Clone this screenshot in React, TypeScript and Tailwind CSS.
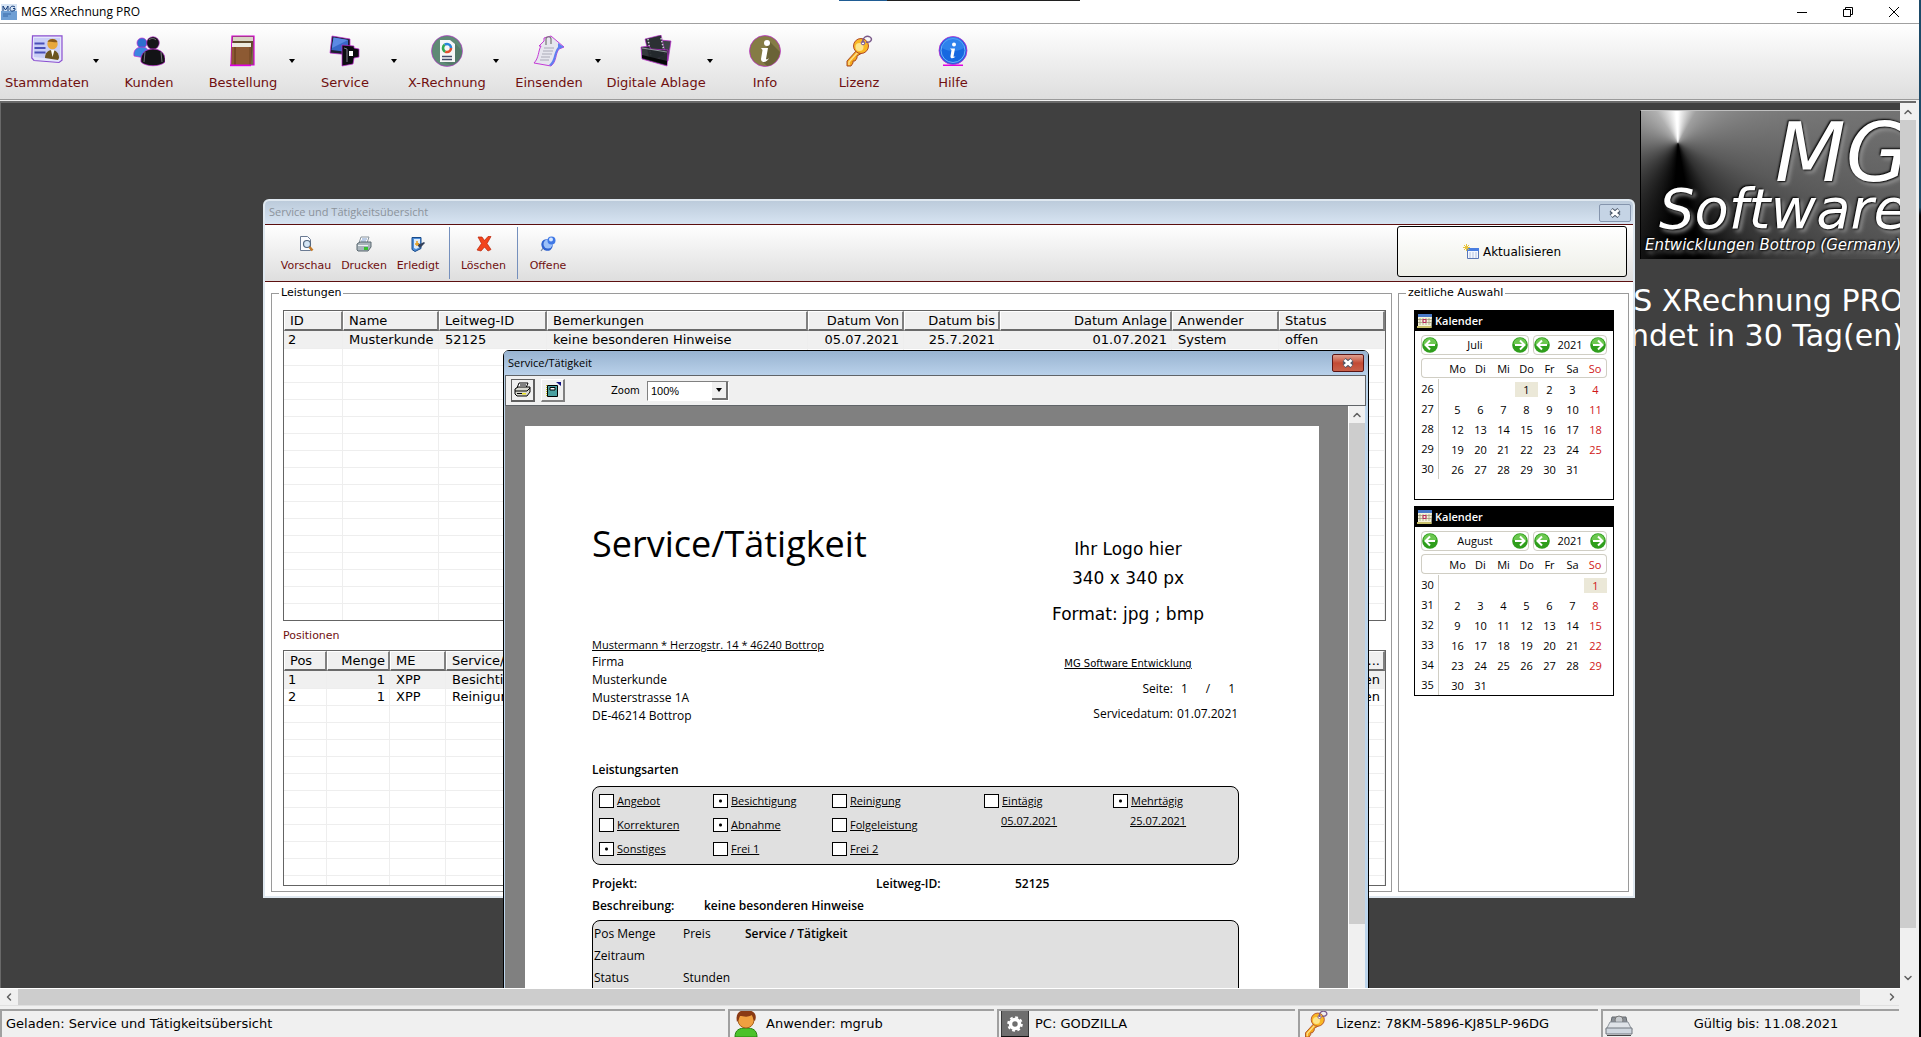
import React, { useState } from "react";
import { ChevronDown, ChevronLeft, ChevronRight, ChevronUp } from "lucide-react";

const FRINGE = "#c026d3";

/* ---------- Icons ---------- */

const CardIcon = () => (
  <svg className="h-8 w-8" viewBox="0 0 32 32">
    <path d="M1.5 0.8h29.5v24.5l-3 2.2L3 25.5 0.8 23z" fill="#e4e6fb" stroke="#8a4fd0" strokeWidth="1.2" />
    <path d="M3 3h26v20l-2 1.5L3 22z" fill="#c9cdf6" />
    <path d="M3.5 8.5h10M3.5 13h11M3.5 17.5h11" stroke="#4b50b8" strokeWidth="1.8" />
    <path d="M14 23c0-5 3-8 7-8s7 3 7 8l-1 2z" fill="#6b5420" />
    <path d="M20 15l1.5 7 2-7z" fill="#fff" />
    <circle cx="21.5" cy="9" r="5.2" fill="#e8a83c" />
    <path d="M16.5 7c1-4 9-4 10 0-2 1-8-1-10 0z" fill="#8a5a1a" />
  </svg>
);

const UsersIcon = () => (
  <svg className="h-8 w-8" viewBox="0 0 32 32">
    <circle cx="9" cy="8" r="5" fill="#2d6fd0" stroke={FRINGE} strokeWidth="0.7" />
    <path d="M1 21c-1-6 3-9 8-9s7 3 8 8l-5 3z" fill="#3b86e0" stroke={FRINGE} strokeWidth="0.7" />
    <circle cx="20" cy="8" r="6.3" fill="#16161a" stroke={FRINGE} strokeWidth="0.6" />
    <path d="M8 27c-1-9 5-13 12-13s13 4 12 13c-5 5-19 5-24 0z" fill="#131316" stroke={FRINGE} strokeWidth="0.7" />
    <path d="M12 17l-1 10M28 17l1 10" stroke="#8a8a92" strokeWidth="0.8" />
    <path d="M16 5c2-2 5-2 7 0" stroke="#777" fill="none" />
  </svg>
);

const BooksIcon = () => (
  <svg className="h-8 w-8" viewBox="0 0 32 32">
    <path d="M5 1h22v29H4z" fill="#7a6a48" stroke="#d400d4" strokeWidth="1.2" />
    <path d="M6 2h20v4H6z" fill="#d8d6c4" />
    <path d="M6 6h20l-2 24H6z" fill="#5f4a2c" />
    <path d="M5 8h19v4H5z" fill="#eceade" />
    <path d="M4.500 12H24v18H4.500z" fill="#8d5a33" />
    <path d="M8 12v18" stroke="#5e3618" />
    <path d="M23 12v18" stroke="#6d4423" />
    <path d="M3 29.500h21v1.700H3z" fill="#e000e0" />
  </svg>
);

const ServiceIcon = () => (
  <svg className="h-8 w-8" viewBox="0 0 32 32">
    <path d="M3 1l18 3v16l-20-2z" fill="#1c1f30" stroke={FRINGE} strokeWidth="0.7" />
    <path d="M4.500 2.500L19 5v12L2.500 15z" fill="#3868c8" />
    <path d="M4.500 2.500L19 5 3 13z" fill="#5b8ae4" />
    <path d="M13 10l12 1v2l5 1v8l-5 1-1 6-11 2z" fill="#0c0c10" stroke={FRINGE} strokeWidth="0.7" />
    <path d="M20 16h4v5h-4z" fill="#fff" />
    <path d="M15 13l3 1v13" stroke="#80808c" fill="none" />
  </svg>
);

const InvoiceIcon = () => (
  <svg className="h-8 w-8" viewBox="0 0 32 32">
    <circle cx="16" cy="16" r="15.500" fill="#5f8a76" stroke={FRINGE} strokeWidth="0.6" />
    <path d="M24 8l7 8c0 7-5 13-11 14l-11-4z" fill="#547a69" />
    <path d="M9 5h10l5 4v18H9z" fill="#f7f7f7" />
    <circle cx="16" cy="13" r="4" fill="none" stroke="#e2502c" strokeWidth="2.600" strokeDasharray="8 17" />
    <circle cx="16" cy="13" r="4" fill="none" stroke="#35a853" strokeWidth="2.600" strokeDasharray="8 17" strokeDashoffset="-8" />
    <circle cx="16" cy="13" r="4" fill="none" stroke="#2a86d8" strokeWidth="2.600" strokeDasharray="9 16" strokeDashoffset="-16" />
    <path d="M11 21.500h10M11 24.500h10" stroke="#444b68" strokeWidth="1.300" />
  </svg>
);

const SendIcon = () => (
  <svg className="h-8 w-8" viewBox="0 0 32 32">
    <path d="M11 3l7-2 13 11-5 2c-4 5-2 12-8 17L1 28c5-5 4-12 7-17H6l5-5z" fill="#e6e6ee" stroke={FRINGE} strokeWidth="0.9" />
    <path d="M25 12c-5 6-3 13-9 18l2 1c6-5 4-12 8-17l5-2-6-4z" fill="#5f7ff0" />
    <path d="M11 13h10M10 16h10M9 19h10M8 22h9M7 25h9" stroke="#a4a4b0" strokeWidth="0.9" />
    <path d="M13 10V4c0-3 5-3 5 0v5" stroke="#777" fill="none" strokeWidth="1.200" />
  </svg>
);

const ArchiveIcon = () => (
  <svg className="h-8 w-8" viewBox="0 0 32 32">
    <path d="M20 5l11 1-3 20-8 2z" fill="#3e4448" stroke={FRINGE} strokeWidth="0.7" />
    <path d="M5 4l16-4 5 20-16 6z" fill="#2b3033" stroke={FRINGE} strokeWidth="0.6" />
    <path d="M8 4l3 18M21 3l4 17" stroke="#c8ced2" strokeWidth="1.500" strokeDasharray="1.500 1.500" />
    <path d="M1 12l8-1 2 3 17 1-1 16-25-7z" fill="#23282b" fillOpacity="0.920" stroke={FRINGE} strokeWidth="0.7" />
    <path d="M2 13l25 4" stroke="#8f979b" />
    <path d="M2 20l25 6v4L2 23z" fill="#050607" />
  </svg>
);

const InfoIcon = () => (
  <svg className="h-8 w-8" viewBox="0 0 32 32">
    <circle cx="16" cy="16" r="15.500" fill="#857c45" stroke={FRINGE} strokeWidth="0.700" />
    <path d="M20 6l11 11c-1 7-6 13-13 14l-5-5z" fill="#6a6337" />
    <circle cx="18" cy="8" r="3" fill="#fff" />
    <path d="M12 13h7l-2 11c1 1 2 0 3-1-1 4-8 6-8 1l1.500-9z" fill="#fff" />
  </svg>
);

const KeyIcon = ({ className = "h-8 w-8" }: { className?: string }) => (
  <svg className={className} viewBox="0 0 32 32">
    <path d="M14 15L4 26v5h4l2-3v-2h2l2-3v-2l5-3z" fill="#f5a81c" stroke="#a84a20" />
    <path d="M15 17L6 27v3" stroke="#fde08a" strokeWidth="1.500" fill="none" />
    <circle cx="18" cy="11" r="7.500" fill="#f9b825" stroke="#b04a28" />
    <circle cx="16.500" cy="12" r="4" fill="#fde58a" />
    <circle cx="20" cy="8" r="1.800" fill="#fff" stroke="#7a5a9a" />
    <path d="M20 8c-1-6 4-8 7-6s1 6-4 5" fill="none" stroke="#7a5a8a" strokeWidth="1.500" />
  </svg>
);

const HelpIcon = () => (
  <svg className="h-8 w-8" viewBox="0 0 32 32">
    <path d="M6 29.500h20v1.500H6z" fill="#e000e0" />
    <circle cx="16" cy="15.500" r="14" fill="#1668e0" stroke={FRINGE} strokeWidth="0.800" />
    <circle cx="16" cy="15.500" r="12" fill="none" stroke="#8cc0ff" strokeWidth="0.800" />
    <path d="M5 13a11 11 0 0 1 22 0c-6 4-16 4-22 0z" fill="#3f94f4" opacity="0.600" />
    <circle cx="17" cy="9.500" r="2" fill="#fff" />
    <path d="M13 13.500h5l-1.500 8c1 .5 1.500 0 2-.5-1 2.500-5.500 3.500-5 0l1-6z" fill="#fff" />
  </svg>
);

const PreviewIcon = () => (
  <svg className="h-4 w-4" viewBox="0 0 16 16">
    <path d="M2.500 .5h7l3 3v11h-10z" fill="#fbfcff" stroke="#6a7a92" />
    <circle cx="9" cy="8" r="3.500" fill="#d5e6f6" stroke="#52677f" strokeWidth="1.200" />
    <path d="M11.500 11l3 3.500" stroke="#c47a28" strokeWidth="2.500" />
  </svg>
);

const PrinterIcon = () => (
  <svg className="h-4 w-4" viewBox="0 0 16 16">
    <path d="M5 1h8l-2 6H3z" fill="#fff" stroke="#8a949c" />
    <path d="M6 3h5M5 5h5" stroke="#7a9acb" />
    <path d="M1 8l3-2h11v5l-3 4H2l-1-1z" fill="#a9b4bb" stroke="#5b6870" />
    <path d="M2 9.500h10" stroke="#eef2f4" />
    <path d="M8 11h4v3H8z" fill="#36c030" />
  </svg>
);

const DoneIcon = () => (
  <svg className="h-4 w-4" viewBox="0 0 16 16">
    <path d="M2 1.500h9v11l-6 3-3-2z" fill="#4f8ed8" stroke="#174a8a" />
    <path d="M4 3h6v8l-4 2-2-1z" fill="#dcebfa" />
    <path d="M8 7l2 1 4-2 1 1-5 5-2-2z" fill="#33405a" />
    <path d="M7 5v5M5 8h4" stroke="#e8a020" strokeWidth="1.500" />
  </svg>
);

const DeleteIcon = () => (
  <svg className="h-4 w-4" viewBox="0 0 16 16">
    <path d="M2 1h4l2.500 3.500L12 .5h3L11 7.500l4 6-3 1.500-3.500-4L5 15l-4-1 4.500-6.500z" fill="#f2451c" stroke="#b82208" strokeWidth="0.700" />
  </svg>
);

const PinIcon = () => (
  <svg className="h-4 w-4" viewBox="0 0 16 16">
    <path d="M4 11l-3 4" stroke="#7a8aa0" strokeWidth="1.200" />
    <ellipse cx="7" cy="9" rx="5.500" ry="6" fill="#2f62d0" transform="rotate(-35 7 9)" />
    <circle cx="8" cy="8" r="4.500" fill="#9cc0f8" />
    <circle cx="11.500" cy="4.500" r="4" fill="#3f78e6" />
    <circle cx="11" cy="3.500" r="2" fill="#d5e6ff" />
  </svg>
);

const RefreshIcon = () => (
  <svg className="h-4 w-4" viewBox="0 0 16 16">
    <path d="M4.500 4.500h11v10h-11z" fill="#f4f8ff" stroke="#5a78b8" />
    <path d="M4 4h12v3H4z" fill="#4a7ee0" />
    <path d="M6 9h8M6 11h8M6 13h8" stroke="#b3c2de" strokeDasharray="2 1" />
    <path d="M3.500 0v7M0 3.500h7M1 1l5 5M6 1L1 6" stroke="#e8c23a" />
  </svg>
);

const CalendarIcon = () => (
  <svg className="h-4 w-4" viewBox="0 0 16 16">
    <path d="M1 1h14v3H1z" fill="#4a7ac8" />
    <path d="M1 4h14l-.5 10H1z" fill="#f5f3da" />
    <path d="M3 5v7M6 5v7M9 5v7M12 5v7M1 6.500h14M1 9.500h14" stroke="#9a9470" strokeWidth="0.700" />
    <path d="M6 6.500h3v3H6z" fill="none" stroke="#c02860" />
    <path d="M0 13h14l1 2H0z" fill="#c9c06a" />
  </svg>
);

const RoundArrow = ({ flip }: { flip?: boolean }) => (
  <svg className={flip ? "h-4 w-4 -scale-x-100" : "h-4 w-4"} viewBox="0 0 16 16">
    <circle cx="8" cy="8" r="7.800" fill="#2f9e1c" />
    <path d="M1.500 7a6.500 6 0 0 1 13 0c-4 2-9 2-13 0z" fill="#6cc850" />
    <path d="M4 8h9M8 3.500L3.500 8 8 12.500" stroke="#fff" strokeWidth="2" fill="none" />
  </svg>
);

const UserIcon = () => (
  <svg className="h-7 w-7 shrink-0 self-end" viewBox="0 0 28 28">
    <path d="M3 28c0-7 4-9 11-9s11 2 11 9z" fill="#4cc22a" stroke="#268010" />
    <circle cx="14" cy="11" r="8" fill="#f0a040" stroke="#a8601a" />
    <path d="M5 13C3 4 8 1 14 1s12 3 9 11c-2-1-2-4-3-6-5 3-9 1-12 1-1 2-1 4-3 6z" fill="#8a3a14" />
  </svg>
);

const GearIcon = () => (
  <svg className="h-7 w-7 shrink-0" viewBox="0 0 28 28">
    <path d="M.5 .5h27v27H.5z" fill="#6e6e6e" stroke="#3a3a3a" />
    <path d="M0 26h28v2H0z" fill="#111" />
    <circle cx="14" cy="14" r="4.500" fill="none" stroke="#fff" strokeWidth="3.500" />
    <circle cx="14" cy="14" r="6.800" fill="none" stroke="#fff" strokeWidth="2" strokeDasharray="2.800 2.540" />
  </svg>
);

const DriveIcon = () => (
  <svg className="h-7 w-7 shrink-0" viewBox="0 0 28 28">
    <path d="M6 12l1-5h14l1 5z" fill="#8b9096" stroke="#666b70" />
    <circle cx="14" cy="10" r="4" fill="#c8ccd0" stroke="#777" />
    <path d="M1 20l4-8h18l4 8z" fill="#dfe3e8" stroke="#8e959c" />
    <path d="M1 18h26v6H1z" fill="#cfd6de" stroke="#70777e" />
    <path d="M2 25.500h24" stroke="#444" />
  </svg>
);

const AppIcon = () => (
  <svg className="h-4 w-4" viewBox="0 0 16 16">
    <path d="M0 0h16v16H0z" fill="#6f9fd4" />
    <path d="M0 0h16v7H0z" fill="#d6e4f4" />
    <path d="M2 7V2l2.500 4L7 2v5M14 3c-3-2-5 0-5 2s2 3 5 1V4.500h-2" stroke="#123a78" fill="none" />
    <path d="M2 10h8M2 12h5" stroke="#3a6aa8" />
  </svg>
);

const CloseGlyph = () => (
  <svg className="h-3 w-3" viewBox="0 0 12 12">
    <path d="M2 3l8 6M10 3L2 9" stroke="#4a5668" strokeWidth="5" />
    <path d="M2.500 3l7 6M9.500 3l-7 6" stroke="#fff" strokeWidth="2.800" />
  </svg>
);

const Triangle = () => (
  <svg className="h-1 w-2" viewBox="0 0 8 4">
    <path d="M1 0h6L4 4z" fill="#000" />
  </svg>
);

/* ---------- Data ---------- */

const mainItems = [
  { label: "Stammdaten", icon: CardIcon, menu: true, width: "w-[86px]" },
  { label: "Kunden", icon: UsersIcon, menu: false, width: "mr-1 w-[86px]" },
  { label: "Bestellung", icon: BooksIcon, menu: true, width: "w-[86px]" },
  { label: "Service", icon: ServiceIcon, menu: true, width: "w-[86px]" },
  { label: "X-Rechnung", icon: InvoiceIcon, menu: true, width: "w-[86px]" },
  { label: "Einsenden", icon: SendIcon, menu: true, width: "w-[86px]" },
  { label: "Digitale Ablage", icon: ArchiveIcon, menu: true, width: "w-[96px]" },
  { label: "Info", icon: InfoIcon, menu: false, width: "w-[90px]" },
  { label: "Lizenz", icon: KeyIcon, menu: false, width: "w-[90px]" },
  { label: "Hilfe", icon: HelpIcon, menu: false, width: "w-[90px]" },
];

interface Column {
  title: string;
  width: string;
  right?: boolean;
}

const serviceColumns: Column[] = [
  { title: "ID", width: "w-[59px]" },
  { title: "Name", width: "w-[96px]" },
  { title: "Leitweg-ID", width: "w-[108px]" },
  { title: "Bemerkungen", width: "w-[261px]" },
  { title: "Datum Von", width: "w-[96px]", right: true },
  { title: "Datum bis", width: "w-[96px]", right: true },
  { title: "Datum Anlage", width: "w-[172px]", right: true },
  { title: "Anwender", width: "w-[107px]" },
  { title: "Status", width: "" },
];

const serviceRows = [
  ["2", "Musterkunde", "52125", "keine besonderen Hinweise", "05.07.2021", "25.7.2021", "01.07.2021", "System", "offen"],
];

const positionColumns: Column[] = [
  { title: "Pos", width: "w-[43px]" },
  { title: "Menge", width: "w-[63px]", right: true },
  { title: "ME", width: "w-[56px]" },
  { title: "Service/Tätigkeit", width: "" },
  { title: "Sta...", width: "w-[60px]", right: true },
];

const positionRows = [
  ["1", "1", "XPP", "Besichtigung", "offen"],
  ["2", "1", "XPP", "Reinigung", "offen"],
];

const weekdays = ["Mo", "Di", "Mi", "Do", "Fr", "Sa", "So"];

/* ---------- Building blocks ---------- */

const DataTable = ({ columns, rows, fill }: { columns: Column[]; rows: string[][]; fill: number }) => (
  <table className="w-full table-fixed border-separate border-spacing-0 text-[13px] leading-4 text-black">
    <thead>
      <tr>
        {columns.map((c) => (
          <th
            key={c.title}
            className={`${c.width} h-[20px] overflow-hidden border-t border-l border-r-2 border-b-2 border-t-white border-l-white border-r-[#808080] border-b-[#6a6a6a] bg-[#f0f0f0] font-normal whitespace-nowrap ${c.right ? "pr-[3px] text-right" : "pl-[5px] text-left"}`}
          >
            {c.title}
          </th>
        ))}
      </tr>
    </thead>
    <tbody>
      {rows.map((row, r) => (
        <tr key={r} className={r === 0 ? "h-[18px] bg-[#f0f0f0]" : "h-[17px]"}>
          {row.map((cell, i) => (
            <td
              key={i}
              className={`overflow-hidden border-r border-b border-[#eeeeee] py-0 whitespace-nowrap ${columns[i].right ? "pr-1 text-right" : i === 0 ? "pl-1" : "pl-[6px]"}`}
            >
              {cell}
            </td>
          ))}
        </tr>
      ))}
      {Array.from({ length: fill }).map((_, r) => (
        <tr key={`empty-${r}`} className="h-[17px]">
          {columns.map((c) => (
            <td key={c.title} className="border-r border-b border-[#eeeeee] p-0"></td>
          ))}
        </tr>
      ))}
    </tbody>
  </table>
);

interface CalendarProps {
  month: string;
  firstWeek: number;
  offset: number;
  weeks: number;
}

const Calendar = ({ month, firstWeek, offset, weeks }: CalendarProps) => (
  <section className="h-[190px] w-[200px] overflow-hidden border border-black bg-white font-['Open_Sans',sans-serif] text-[11px] text-black">
    <header className="flex h-5 items-center gap-0.5 bg-black px-0.5 font-semibold text-white">
      <CalendarIcon />
      Kalender
    </header>
    <div className="flex gap-1 px-1.5 pt-1">
      <div className="flex h-5 flex-1 items-center justify-between rounded border border-[#d0cec4]">
        <button aria-label="Monat zurück"><RoundArrow /></button>
        <span>{month}</span>
        <button aria-label="Monat vor"><RoundArrow flip /></button>
      </div>
      <div className="flex h-5 w-[74px] items-center justify-between rounded border border-[#d0cec4]">
        <button aria-label="Jahr zurück"><RoundArrow /></button>
        <span>2021</span>
        <button aria-label="Jahr vor"><RoundArrow flip /></button>
      </div>
    </div>
    <table className="mx-1.5 mt-[3px] w-[186px] table-fixed border-separate border-spacing-0 text-center leading-[15px]">
      <thead>
        <tr className="h-5">
          <th className="w-[25px] rounded-l border-y border-l border-[#d0cec4] p-0"></th>
          {weekdays.map((d) => (
            <th
              key={d}
              className={`border-y border-[#d0cec4] p-0 font-normal ${d === "So" ? "rounded-r border-r text-[#d01818]" : ""}`}
            >
              {d}
            </th>
          ))}
        </tr>
      </thead>
      <tbody className="before:block before:h-px">
        {Array.from({ length: weeks }).map((_, w) => (
          <tr key={w} className="h-5">
            <td className="p-0">
              <span className="block h-5 w-[18px] border-r border-[#d0cec4] pr-1 leading-5">{firstWeek + w}</span>
            </td>
            {weekdays.map((d, i) => {
              const day = w * 7 + i + 1 - offset;
              return (
                <td key={d} className={`p-0 ${d === "So" ? "text-[#d01818]" : ""}`}>
                  {day > 0 && day <= 31 && <span className={day === 1 ? "block bg-[#ebe8d8]" : "block"}>{day}</span>}
                </td>
              );
            })}
          </tr>
        ))}
      </tbody>
    </table>
  </section>
);

const ToolButton = ({ label, icon: Icon, width }: { label: string; icon: React.FC; width: string }) => (
  <button className={`${width} flex flex-col items-center justify-end gap-[5px] pb-[6px] text-[11px] leading-[18px] text-[#701010]`}>
    <Icon />
    {label}
  </button>
);

const Check = ({ label, on = false }: { label: string; on?: boolean }) => (
  <label className="flex h-6 items-center gap-[3px] text-[11px] underline">
    <input
      type="checkbox"
      defaultChecked={on}
      className="h-[14px] w-[15px] appearance-none border border-black bg-white checked:bg-[radial-gradient(circle,black_1px,transparent_2px)]"
    />
    {label}
  </label>
);

const Report = () => (
  <article className="min-h-[1123px] w-[794px] shrink-0 bg-white pt-[93px] pr-20 pl-[67px] font-['Open_Sans',sans-serif] text-[12px] leading-[18px] text-black">
    <div className="flex justify-between">
      <div>
        <h1 className="text-[36px] leading-[50px]">Service/Tätigkeit</h1>
        <p className="mt-[68px] text-[11px] leading-4 underline">Mustermann * Herzogstr. 14 * 46240 Bottrop</p>
        <address className="not-italic">
          Firma<br />Musterkunde<br />Musterstrasse 1A<br />DE-46214 Bottrop
        </address>
      </div>
      <div className="w-[222px] pt-5">
        <div className="flex flex-col items-center font-['DejaVu_Sans',sans-serif] text-[17px] leading-5">
          <span>Ihr Logo hier</span>
          <span className="mt-[9px]">340 x 340 px</span>
          <span className="mt-4">Format: jpg ; bmp</span>
          <span className="mt-8 text-[10px] leading-4 underline">MG Software Entwicklung</span>
        </div>
        <dl className="mt-[9px] grid grid-cols-[156px_1fr] gap-x-1 gap-y-[9px] leading-4">
          <dt className="text-right">Seite:</dt>
          <dd className="flex justify-between pr-1 pl-1"><span>1</span><span>/</span><span>1</span></dd>
          <dt className="text-right">Servicedatum:</dt>
          <dd className="whitespace-nowrap">01.07.2021</dd>
        </dl>
      </div>
    </div>
    <h2 className="mt-9 font-semibold">Leistungsarten</h2>
    <div className="mt-[7px] grid h-[79px] grid-cols-[114px_119px_152px_129px_1fr] rounded-lg border border-black bg-[#e0e0e0] pt-0.5 pl-1.5">
      <div>
        <Check label="Angebot" />
        <Check label="Korrekturen" />
        <Check label="Sonstiges" on />
      </div>
      <div>
        <Check label="Besichtigung" on />
        <Check label="Abnahme" on />
        <Check label="Frei 1" />
      </div>
      <div>
        <Check label="Reinigung" />
        <Check label="Folgeleistung" />
        <Check label="Frei 2" />
      </div>
      <div>
        <Check label="Eintägig" />
        <p className="pl-[17px] text-[11px] leading-4 underline">05.07.2021</p>
      </div>
      <div>
        <Check label="Mehrtägig" on />
        <p className="pl-[17px] text-[11px] leading-4 underline">25.07.2021</p>
      </div>
    </div>
    <div className="mt-[10px] grid grid-cols-[284px_139px_1fr] font-semibold">
      <span>Projekt:</span>
      <span>Leitweg-ID:</span>
      <span>52125</span>
    </div>
    <div className="mt-1 grid grid-cols-[112px_1fr] font-semibold">
      <span>Beschreibung:</span>
      <span>keine besonderen Hinweise</span>
    </div>
    <div className="mt-[5px] grid h-[160px] grid-cols-[89px_62px_1fr] content-start gap-y-1 rounded-lg border border-black bg-[#e0e0e0] py-1 pl-px">
      <span>Pos Menge</span>
      <span>Preis</span>
      <span className="font-semibold">Service / Tätigkeit</span>
      <span className="col-span-3">Zeitraum</span>
      <span>Status</span>
      <span>Stunden</span>
    </div>
  </article>
);

const ServiceWindow = () => (
  <section className="absolute top-[96px] left-[262px] flex h-[699px] w-[1372px] flex-col rounded-t-md border-2 border-[#dfe8f0] bg-white">
    <header className="flex h-[23px] shrink-0 items-center justify-between rounded-t bg-linear-to-b from-[#bccbdb] to-[#d7e4f2] pr-0.5 pl-1 font-['Open_Sans',sans-serif] text-[11px] text-[#8b939c]">
      Service und Tätigkeitsübersicht
      <button aria-label="Schließen" className="flex h-[18px] w-8 items-center justify-center rounded-xs border border-[#8595ad] bg-[#c5d4e5]">
        <CloseGlyph />
      </button>
    </header>
    <div className="flex h-[58px] shrink-0 items-stretch border-y border-[#5c1010] bg-linear-to-b from-white to-[#dedede] pr-1.5">
      <div className="flex w-[184px] pl-2.5">
        <ToolButton label="Vorschau" icon={PreviewIcon} width="w-[62px]" />
        <ToolButton label="Drucken" icon={PrinterIcon} width="w-[54px]" />
        <ToolButton label="Erledigt" icon={DoneIcon} width="w-[54px]" />
      </div>
      <div className="my-0.5 w-px bg-[#7590bd]"></div>
      <ToolButton label="Löschen" icon={DeleteIcon} width="w-[67px]" />
      <div className="my-0.5 w-px bg-[#7590bd]"></div>
      <ToolButton label="Offene" icon={PinIcon} width="w-[60px]" />
      <button className="mt-px mb-1 ml-auto flex w-[230px] items-center justify-center gap-1 rounded-[3px] border border-black bg-linear-to-b from-white to-[#eeefe8] text-[12px] text-black">
        <RefreshIcon />
        Aktualisieren
      </button>
    </div>
    <div className="flex min-h-0 flex-1 gap-1.5 pt-1 pr-1 pb-1 pl-1.5 text-black">
      <fieldset className="min-w-0 flex-1 border border-[#9a9a9a] pr-[5px] pl-[11px]">
        <legend className="-ml-1 px-0.5 text-[11px] leading-[14px]">Leistungen</legend>
        <div className="mt-[10px] h-[311px] overflow-hidden border border-[#646464]">
          <DataTable columns={serviceColumns} rows={serviceRows} fill={16} />
        </div>
        <h3 className="text-[11px] leading-[29px] text-[#701010]">Positionen</h3>
        <div className="h-[236px] overflow-hidden border border-[#646464]">
          <DataTable columns={positionColumns} rows={positionRows} fill={11} />
        </div>
      </fieldset>
      <fieldset className="w-[231px] border border-[#9a9a9a] pl-[15px]">
        <legend className="-ml-2 px-0.5 text-[11px] leading-[14px]">zeitliche Auswahl</legend>
        <div className="mt-[10px] flex flex-col gap-1.5">
          <Calendar month="Juli" firstWeek={26} offset={3} weeks={5} />
          <Calendar month="August" firstWeek={30} offset={6} weeks={6} />
        </div>
      </fieldset>
    </div>
  </section>
);

const PreviewWindow = () => {
  const [zoom, setZoom] = useState("100%");

  return (
    <section className="absolute top-[247px] -bottom-2 left-[502px] flex w-[866px] flex-col rounded-t-md border border-black bg-[#bcd5ec]">
      <header className="flex h-6 shrink-0 items-center justify-between rounded-t bg-linear-to-b from-[#98b3d0] to-[#b9d1ea] pr-1 pl-1 font-['Open_Sans',sans-serif] text-[11px] text-black">
        Service/Tätigkeit
        <button aria-label="Schließen" className="flex h-[18px] w-8 items-center justify-center rounded-xs border border-[#5a1414] bg-linear-to-b from-[#e0a090] via-[#c34a34] to-[#c8604a]">
          <CloseGlyph />
        </button>
      </header>
      <div className="mr-0.5 ml-px flex h-[31px] shrink-0 items-center border border-[#606468] bg-[#f0f0f0] pl-[5px] text-black">
        <button aria-label="Drucken" className="flex h-[23px] w-6 items-center justify-center border-t border-r-2 border-b-2 border-l border-[#606060]">
          <svg className="h-4 w-[18px]" viewBox="0 0 18 16">
            <path d="M5 1h9l-2 5H3z" fill="#fff" stroke="#000" />
            <path d="M1 7l3-2h12v5l-3 4H3l-2-2z" fill="#d8d8d0" stroke="#000" />
            <path d="M1 9h12l3-3M3 11.500h9M6 3h6" stroke="#000" fill="none" />
            <path d="M8 11h4v1.500H8z" fill="#e8e020" />
          </svg>
        </button>
        <button aria-label="Export" className="ml-1.5 flex h-[23px] w-6 items-center justify-center border-t border-r-2 border-b-2 border-l border-t-white border-r-[#808080] border-b-[#808080] border-l-white">
          <svg className="h-4 w-4" viewBox="0 0 16 16">
            <path d="M2.500 3.500h10v11h-10z" fill="#4aa0a0" stroke="#000" />
            <path d="M5 5.500h5v2.500H5z" fill="#fff" stroke="#000" />
            <path d="M1.500 3v12" stroke="#c8c020" strokeDasharray="1 1" />
            <path d="M11 0h5v4z" fill="#101080" />
          </svg>
        </button>
        <label htmlFor="zoom" className="w-[82px] pl-[46px] text-[10px]">Zoom</label>
        <div className="relative h-5 w-[82px] border border-t-[#808080] border-r-white border-b-white border-l-[#808080] bg-white">
          <select
            id="zoom"
            value={zoom}
            onChange={(e) => setZoom(e.target.value)}
            className="block h-[18px] w-full appearance-none bg-white pl-[3px] font-['Liberation_Sans',sans-serif] text-[11px] leading-[18px]"
          >
            <option>50%</option>
            <option>100%</option>
            <option>200%</option>
          </select>
          <span className="pointer-events-none absolute inset-y-0 right-0 flex w-4 items-center justify-center border-r-2 border-b-2 border-[#707070] bg-[#f0f0f0]">
            <Triangle />
          </span>
        </div>
      </div>
      <div className="mr-[3px] ml-px flex min-h-0 flex-1">
        <div className="min-w-0 flex-1 overflow-hidden bg-[#808080] pt-5 pl-5">
          <Report />
        </div>
        <div className="flex w-[17px] flex-col border-l border-white bg-[#f0f0f0]">
          <button aria-label="Nach oben" className="flex h-[17px] items-center justify-center text-[#606060]">
            <ChevronUp size={12} strokeWidth={3} />
          </button>
          <div className="h-[501px] bg-[#cdcdcd]"></div>
        </div>
      </div>
    </section>
  );
};

const Brand = () => (
  <div className="absolute top-[7px] right-0 flex flex-col items-end text-white">
    <div className="h-[149px] w-[260px] overflow-hidden border-t border-l border-t-[#c0c0c0] border-l-black bg-[conic-gradient(from_0deg_at_37px_32px,#ffffff_0deg,#a0a0a0_30deg,#787878_75deg,#5a5a5a_110deg,#303030_145deg,#000000_170deg,#000000_184deg,#303030_220deg,#707070_270deg,#b0b0b0_325deg,#ffffff_356deg)] pt-2.5 whitespace-nowrap italic [text-shadow:1px_1px_2px_#000,-1px_-1px_2px_#000,3px_3px_4px_#999]">
      <p className="pl-[134px] text-[82px] leading-[64px]">MG</p>
      <p className="pl-[18px] text-[56px] leading-[48px]">Software</p>
      <p className="pl-1 text-[15px] leading-6">Entwicklungen Bottrop (Germany)</p>
    </div>
    <p className="-mr-1 pt-6 text-right text-[30px] leading-[35px] whitespace-nowrap">
      MGS XRechnung PRO<br />endet in 30 Tag(en)
    </p>
  </div>
);

const StatusPanel = ({ width, icon, children, center }: { width: string; icon?: React.ReactNode; children: React.ReactNode; center?: boolean }) => (
  <div className={`${width} flex items-center gap-1 overflow-hidden border-t-2 border-l-2 border-[#a0a0a0] pl-0.5 whitespace-nowrap`}>
    {icon}
    <span className={center ? "flex-1 pr-1 text-center" : "pl-0.5"}>{children}</span>
  </div>
);

/* ---------- Page ---------- */

const App = () => {
  return (
    <div className="flex h-screen overflow-hidden bg-[#f0f0f0] font-['DejaVu_Sans',sans-serif]">
      <div className="flex min-w-0 flex-1 flex-col">
        <header className="relative flex h-6 shrink-0 items-center justify-between border-b border-[#a0a0a0] bg-white pr-0.5 pl-px font-['Open_Sans',sans-serif] text-[12px] text-black">
          <div className="flex items-center gap-1">
            <AppIcon />
            MGS XRechnung PRO
          </div>
          <div className="absolute top-0 left-[839px] h-px w-[241px] bg-linear-to-r from-[#1f5c94] from-20% to-[#202020] to-20%"></div>
          <div className="flex">
            <button aria-label="Minimieren" className="flex w-[46px] justify-center">
              <svg className="h-3 w-3" viewBox="0 0 12 12"><path d="M1 6.500h10" stroke="#000" /></svg>
            </button>
            <button aria-label="Verkleinern" className="flex w-[46px] justify-center">
              <svg className="h-3 w-3" viewBox="0 0 12 12"><path d="M1.500 3.500h7v7h-7zM3.500 3V1.500h7v7H9" stroke="#000" fill="none" /></svg>
            </button>
            <button aria-label="Schließen" className="flex w-[46px] justify-center">
              <svg className="h-3 w-3" viewBox="0 0 12 12"><path d="M1 1l10 10M11 1L1 11" stroke="#000" /></svg>
            </button>
          </div>
        </header>

        <nav className="flex h-[76px] shrink-0 items-start gap-1 border-b border-[#9a9a9a] bg-linear-to-b from-white to-[#dedede] pt-[11px] pl-1">
          {mainItems.map(({ label, icon: Icon, menu, width }) => (
            <div key={label} className="flex">
              <button className={`${width} flex flex-col items-center gap-[7px] text-[13px] leading-[18px] whitespace-nowrap text-[#701010]`}>
                <Icon />
                {label}
              </button>
              {menu && (
                <button aria-label={`${label} Menü`} className="flex h-[52px] w-3 items-center justify-center">
                  <Triangle />
                </button>
              )}
            </div>
          ))}
        </nav>

        <div className="mt-px mr-[3px] flex min-h-0 flex-1 border-t-2 border-[#696969]">
          <main className="relative min-w-0 flex-1 overflow-hidden border-l border-[#696969] bg-[#404040]">
            <Brand />
            <ServiceWindow />
            <PreviewWindow />
          </main>
          <div className="flex w-4 flex-col bg-[#f0f0f0] text-[#606060]">
            <button aria-label="Nach oben" className="flex h-[17px] shrink-0 items-center justify-center">
              <ChevronUp size={12} strokeWidth={3} />
            </button>
            <div className="min-h-0 flex-1 bg-[#cdcdcd]"></div>
            <button aria-label="Nach unten" className="flex h-[60px] shrink-0 items-end justify-center pb-1">
              <ChevronDown size={12} strokeWidth={3} />
            </button>
          </div>
        </div>

        <div className="mr-[19px] flex h-[17px] shrink-0 border-t border-white text-[#606060]">
          <button aria-label="Nach links" className="flex w-[18px] items-center justify-center">
            <ChevronLeft size={12} strokeWidth={3} />
          </button>
          <div className="flex-1 bg-[#cdcdcd]"></div>
          <button aria-label="Nach rechts" className="flex w-10 items-center justify-end pr-0.5">
            <ChevronRight size={12} strokeWidth={3} />
          </button>
        </div>

        <footer className="mr-5 flex h-8 shrink-0 gap-[3px] border-t border-[#e0e0e0] pt-[3px] text-[13px] text-black">
          <StatusPanel width="flex-1 border-l-0">Geladen: Service und Tätigkeitsübersicht</StatusPanel>
          <StatusPanel width="w-[266px]" icon={<UserIcon />}>Anwender: mgrub</StatusPanel>
          <StatusPanel width="w-[298px]" icon={<GearIcon />}>PC: GODZILLA</StatusPanel>
          <StatusPanel width="w-[300px]" icon={<KeyIcon className="h-7 w-7 shrink-0" />}>Lizenz: 78KM-5896-KJ85LP-96DG</StatusPanel>
          <StatusPanel width="w-[298px]" icon={<DriveIcon />} center>Gültig bis: 11.08.2021</StatusPanel>
        </footer>
      </div>
      <div className="w-0.5 bg-linear-to-b from-[#1d4a68] from-20% to-black to-21%"></div>
    </div>
  );
};

export default App;
